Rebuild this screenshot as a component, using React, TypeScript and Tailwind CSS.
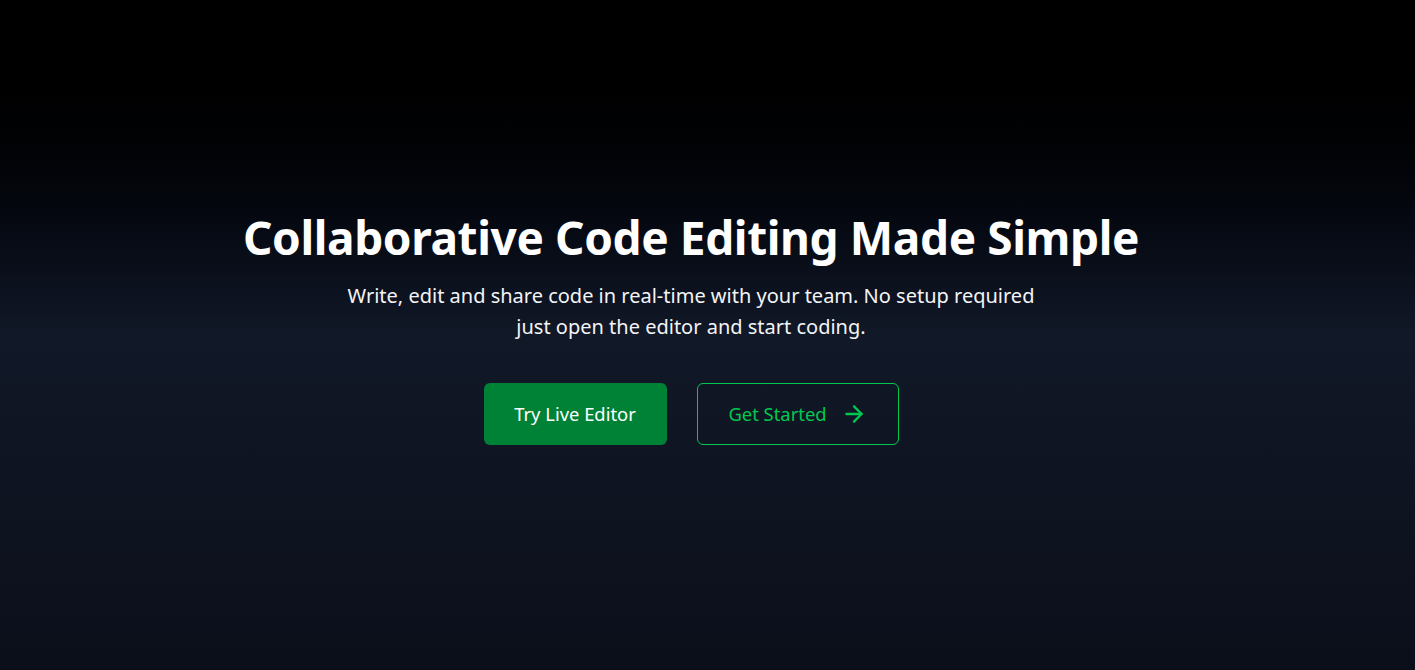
import React from "react";

export default function App() {
  return (
    <div className="min-h-screen w-full bg-gradient-to-b from-black via-[#111827] via-50% to-[#0b0f1a] font-['Noto_Sans',sans-serif] text-white antialiased">
      <section className="flex flex-col items-center pr-[33px] pt-[206px]">
        <h1 className="text-[46px] font-bold leading-[62px] tracking-[-0.4px]">
          Collaborative Code Editing Made Simple
        </h1>
        <p className="mt-[12px] text-center text-[20px] leading-[31px] text-gray-100">
          Write, edit and share code in real-time with your team. No setup required
          <br />
          just open the editor and start coding.
        </p>
        <div className="mt-[41px] flex items-center gap-[30px]">
          <button className="h-[62px] w-[183px] rounded-md bg-[#008236] text-[18.4px] text-white">
            Try Live Editor
          </button>
          <button className="flex h-[62px] w-[202px] items-center justify-center gap-[14px] rounded-md border border-[#00c950] text-[18.4px] text-[#00c950]">
            <span>Get Started</span>
            <svg width="26" height="26" viewBox="0 0 24 24" fill="none" stroke="currentColor" strokeWidth="2.1" strokeLinecap="round" strokeLinejoin="round">
              <path d="M5 12h14" />
              <path d="m12 5 7 7-7 7" />
            </svg>
          </button>
        </div>
      </section>
    </div>
  );
}
